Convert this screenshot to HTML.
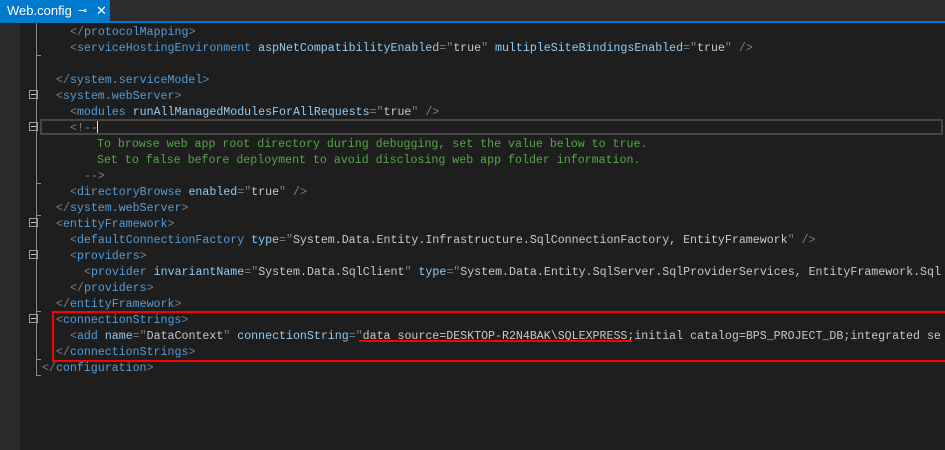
<!DOCTYPE html>
<html><head><meta charset="utf-8"><style>
html,body{margin:0;width:945px;height:450px;overflow:hidden;}
body{background:#1e1e1e;position:relative;font-family:"Liberation Mono",monospace;}
#clip{position:absolute;left:0;top:0;width:945px;height:450px;overflow:hidden;}
#tabbar{position:absolute;left:0;top:0;width:945px;height:21px;background:#2d2d30;}
#tabline{position:absolute;left:0;top:21px;width:945px;height:2px;background:#007acc;}
#tab{position:absolute;left:0;top:0;width:110px;height:22px;background:#007acc;color:#fff;font-family:"Liberation Sans",sans-serif;font-size:13px;line-height:22px;}
#gut{position:absolute;left:0;top:23px;width:20px;height:427px;background:#2a2a2b;}
.l{position:absolute;font-size:11.62px;line-height:16px;white-space:pre;color:#c8c8c8;}
.b{color:#808080}.t{color:#569cd6}.a{color:#92caf4}.v{color:#c8c8c8}.c{color:#57a64a}
.fold{position:absolute;left:29px;width:9px;height:9px;border:1px solid #999;box-sizing:border-box;}
.fold:after{content:"";position:absolute;left:1px;top:3px;width:5px;height:1px;background:#ccc;}
.vl{position:absolute;width:1px;background:#8a8a8a;}
.hl{position:absolute;height:1px;width:5px;background:#8a8a8a;}
#txt{position:absolute;left:0;top:2px;width:945px;height:448px;overflow:hidden;}
</style></head><body><div id="clip">
<div id="tabbar"></div>
<div id="tab"><span style="position:absolute;left:7px">Web.config</span><span style="position:absolute;left:78px;font-size:11px">⊸</span><span style="position:absolute;left:96px">✕</span></div>
<div id="tabline"></div>
<div id="gut"></div>
<div style="position:absolute;left:40px;top:119px;width:903px;height:16px;border:2px solid #464646;box-sizing:border-box"></div>
<div style="position:absolute;left:97px;top:121px;width:1px;height:12px;background:#ddd"></div>
<div class="vl" style="left:36px;top:23px;height:353px"></div>
<div class="hl" style="left:36px;top:55px"></div>
<div class="hl" style="left:36px;top:183px"></div>
<div class="hl" style="left:36px;top:215px"></div>
<div class="hl" style="left:36px;top:311px"></div>
<div class="hl" style="left:36px;top:359px"></div>
<div class="hl" style="left:36px;top:375px"></div>
<div class="fold" style="top:90px"></div>
<div class="fold" style="top:122px"></div>
<div class="fold" style="top:218px"></div>
<div class="fold" style="top:250px"></div>
<div class="fold" style="top:314px"></div>
<div id="txt">
<div class="l" style="left:70px;top:23px"><span class="b">&lt;/</span><span class="t">protocolMapping</span><span class="b">&gt;</span></div>
<div class="l" style="left:70px;top:39px"><span class="b">&lt;</span><span class="t">serviceHostingEnvironment</span> <span class="a">aspNetCompatibilityEnabled</span><span class="b">="</span>true<span class="b">"</span> <span class="a">multipleSiteBindingsEnabled</span><span class="b">="</span>true<span class="b">"</span> <span class="b">/&gt;</span></div>
<div class="l" style="left:56px;top:71px"><span class="b">&lt;/</span><span class="t">system.serviceModel</span><span class="b">&gt;</span></div>
<div class="l" style="left:56px;top:87px"><span class="b">&lt;</span><span class="t">system.webServer</span><span class="b">&gt;</span></div>
<div class="l" style="left:70px;top:103px"><span class="b">&lt;</span><span class="t">modules</span> <span class="a">runAllManagedModulesForAllRequests</span><span class="b">="</span>true<span class="b">"</span> <span class="b">/&gt;</span></div>
<div class="l" style="left:70px;top:119px"><span class="b">&lt;!--</span></div>
<div class="l c" style="left:97px;top:135px">To browse web app root directory during debugging, set the value below to true.</div>
<div class="l c" style="left:97px;top:151px">Set to false before deployment to avoid disclosing web app folder information.</div>
<div class="l b" style="left:84px;top:167px">--&gt;</div>
<div class="l" style="left:70px;top:183px"><span class="b">&lt;</span><span class="t">directoryBrowse</span> <span class="a">enabled</span><span class="b">="</span>true<span class="b">"</span> <span class="b">/&gt;</span></div>
<div class="l" style="left:56px;top:199px"><span class="b">&lt;/</span><span class="t">system.webServer</span><span class="b">&gt;</span></div>
<div class="l" style="left:56px;top:215px"><span class="b">&lt;</span><span class="t">entityFramework</span><span class="b">&gt;</span></div>
<div class="l" style="left:70px;top:231px"><span class="b">&lt;</span><span class="t">defaultConnectionFactory</span> <span class="a">type</span><span class="b">="</span>System.Data.Entity.Infrastructure.SqlConnectionFactory, EntityFramework<span class="b">"</span> <span class="b">/&gt;</span></div>
<div class="l" style="left:70px;top:247px"><span class="b">&lt;</span><span class="t">providers</span><span class="b">&gt;</span></div>
<div class="l" style="left:84px;top:263px"><span class="b">&lt;</span><span class="t">provider</span> <span class="a">invariantName</span><span class="b">="</span>System.Data.SqlClient<span class="b">"</span> <span class="a">type</span><span class="b">="</span>System.Data.Entity.SqlServer.SqlProviderServices, EntityFramework.Sql</div>
<div class="l" style="left:70px;top:279px"><span class="b">&lt;/</span><span class="t">providers</span><span class="b">&gt;</span></div>
<div class="l" style="left:56px;top:295px"><span class="b">&lt;/</span><span class="t">entityFramework</span><span class="b">&gt;</span></div>
<div class="l" style="left:56px;top:311px"><span class="b">&lt;</span><span class="t">connectionStrings</span><span class="b">&gt;</span></div>
<div class="l" style="left:70px;top:327px"><span class="b">&lt;</span><span class="t">add</span> <span class="a">name</span><span class="b">="</span>DataContext<span class="b">"</span> <span class="a">connectionString</span><span class="b">="</span>data source=DESKTOP-R2N4BAK\SQLEXPRESS;initial catalog=BPS_PROJECT_DB;integrated se</div>
<div class="l" style="left:56px;top:343px"><span class="b">&lt;/</span><span class="t">connectionStrings</span><span class="b">&gt;</span></div>
<div class="l" style="left:42px;top:359px"><span class="b">&lt;/</span><span class="t">configuration</span><span class="b">&gt;</span></div>
</div>
<div style="position:absolute;left:52px;top:311px;width:900px;height:51px;border:2px solid #f00;box-sizing:border-box"></div>
<div style="position:absolute;left:359px;top:340px;width:273px;height:2px;background:#f00"></div>
</div></body></html>
